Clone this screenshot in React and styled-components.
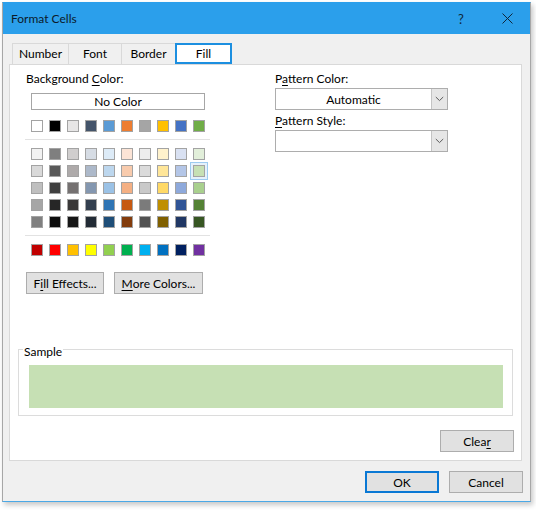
import React from 'react';
import styled, { createGlobalStyle } from 'styled-components';

const Global = createGlobalStyle`
  * { box-sizing: border-box; }
  html, body { margin: 0; padding: 0; background: #ffffff; }
  body {
    font-family: Lato, "Noto Sans", sans-serif;
    font-size: 12px;
    color: #000;
  }
`;

const Page = styled.div`
  width: 536px;
  height: 513px;
  padding: 2px 0 0 2px;
`;

const Window = styled.div`
  width: 529px;
  height: 500px;
  display: flex;
  flex-direction: column;
  background: #f0f0f0;
  border: 1px solid #2b9feb;
  border-left-color: #a7a7a7;
  border-right-color: #a7a7a7;
  border-bottom-color: #4aa8e6;
  box-shadow: 2px 3px 5px rgba(0, 0, 0, 0.22);
`;

const TitleBar = styled.div`
  height: 31px;
  flex: none;
  display: flex;
  align-items: center;
  background: #2b9feb;
  color: #0b1a2a;
`;

const Title = styled.div`
  flex: 1;
  padding-left: 8px;
  font-size: 12px;
`;

const TitleButton = styled.div`
  width: 46px;
  height: 31px;
  display: flex;
  align-items: center;
  justify-content: center;
  font-size: 13px;
  color: #10263a;
`;

const Body = styled.div`
  padding: 9px 8px 0 6px;
  flex: none;
`;

const Tabs = styled.div`
  display: flex;
  height: 21px;
  margin-left: 3px;
`;

const Tab = styled.div`
  position: relative;
  width: ${p => p.$w}px;
  height: 21px;
  margin-left: ${p => (p.$first ? 0 : -1)}px;
  display: flex;
  align-items: center;
  justify-content: center;
  background: ${p => (p.$active ? '#ffffff' : '#f0f0f0')};
  border: ${p => (p.$active ? '2px solid #1c8fe0' : '1px solid #d9d9d9')};
  border-bottom: ${p => (p.$active ? '2px solid #1c8fe0' : 'none')};
  z-index: ${p => (p.$active ? 1 : 0)};
  padding-bottom: 1px;
`;

const Panel = styled.div`
  height: 397px;
  background: #ffffff;
  border: 1px solid #d9d9d9;
  display: flex;
  flex-direction: column;
`;

const TopSection = styled.div`
  display: flex;
  padding: 6px 0 0 16px;
`;

const LeftCol = styled.div`
  width: 249px;
  display: flex;
  flex-direction: column;
`;

const RightCol = styled.div`
  width: 173px;
  display: flex;
  flex-direction: column;
`;

const Label = styled.div`
  height: 15px;
  line-height: 15px;
  margin-top: ${p => p.$mt || 0}px;
  white-space: nowrap;
`;

const NoColorButton = styled.div`
  margin: 7px 0 0 5px;
  width: 174px;
  height: 17px;
  border: 1px solid #a6a6a6;
  background: #ffffff;
  display: flex;
  align-items: center;
  justify-content: center;
  line-height: 15px;
`;

const SwatchRow = styled.div`
  display: flex;
  gap: 6px;
  margin: ${p => p.$mt}px 0 0 5px;
`;

const SwatchGrid = styled.div`
  display: grid;
  grid-template-columns: repeat(10, 12px);
  grid-auto-rows: 12px;
  column-gap: 6px;
  row-gap: 5px;
  margin: 8px 0 0 5px;
`;

const Swatch = styled.span`
  display: block;
  width: 12px;
  height: 12px;
  background: ${p => p.$color};
  border: 1px solid #a3a3a3;
  box-shadow: ${p =>
    p.$selected ? '0 0 0 2px #e5f1fb, 0 0 0 3px #9ccbf0' : 'none'};
`;

const Separator = styled.div`
  height: 1px;
  width: 185px;
  margin: 7px 0 0 -1px;
  background: #e2e2e2;
`;

const ButtonRow = styled.div`
  display: flex;
  gap: 10px;
  margin-top: ${p => p.$mt || 0}px;
  justify-content: ${p => p.$end ? 'flex-end' : 'flex-start'};
  padding-right: ${p => p.$pr || 0}px;
`;

const Button = styled.div`
  width: ${p => p.$w}px;
  height: 22px;
  display: flex;
  align-items: center;
  justify-content: center;
  background: #e1e1e1;
  border: ${p => (p.$primary ? '2px solid #0a78d4' : '1px solid #adadad')};
  line-height: 15px;
  white-space: nowrap;
`;

const Select = styled.div`
  width: 173px;
  height: 22px;
  margin-top: 2px;
  display: flex;
  border: 1px solid #adadad;
  background: #ffffff;
`;

const SelectValue = styled.div`
  flex: 1;
  display: flex;
  align-items: center;
  justify-content: center;
  line-height: 15px;
`;

const DropButton = styled.div`
  width: 16px;
  display: flex;
  align-items: center;
  justify-content: center;
  background: #e6e6e6;
  border-left: 1px solid #c4c4c4;
`;

const BottomSection = styled.div`
  margin-top: auto;
  padding-bottom: 8px;
  display: flex;
  flex-direction: column;
`;

const SampleBox = styled.fieldset`
  margin: 0 8px;
  padding: 6px 9px 7px 10px;
  border: 1px solid #dcdcdc;
  min-width: 0;
`;

const SampleLegend = styled.legend`
  padding: 4px 1px 0;
  margin-left: -6px;
  line-height: 15px;
`;

const SamplePreview = styled.div`
  height: 43px;
  background: ${p => p.$color};
`;

const Footer = styled.div`
  display: flex;
  justify-content: flex-end;
  gap: 10px;
  padding: 10px 7px 0 0;
`;

const Key = styled.span`
  text-decoration: underline;
  text-underline-offset: 2px;
`;

const themeBase = ['#FFFFFF', '#000000', '#E7E6E6', '#44546A', '#5B9BD5', '#ED7D31', '#A5A5A5', '#FFC000', '#4472C4', '#70AD47'];
const shades = [
  ['#F2F2F2', '#7F7F7F', '#D0CECE', '#D6DCE4', '#DDEBF7', '#FCE4D6', '#EDEDED', '#FFF2CC', '#D9E1F2', '#E2EFDA'],
  ['#D9D9D9', '#595959', '#AEAAAA', '#ADB9CA', '#BDD7EE', '#F8CBAD', '#DBDBDB', '#FFE699', '#B4C6E7', '#C6E0B4'],
  ['#BFBFBF', '#404040', '#757171', '#8497B0', '#9BC2E6', '#F4B084', '#C9C9C9', '#FFD966', '#8EA9DB', '#A9D08E'],
  ['#A6A6A6', '#262626', '#3A3838', '#333F4F', '#2F75B5', '#C65911', '#7B7B7B', '#BF8F00', '#305496', '#548235'],
  ['#808080', '#0D0D0D', '#161616', '#222B35', '#1F4E78', '#833C0C', '#525252', '#806000', '#203764', '#375623'],
];
const standard = ['#C00000', '#FF0000', '#FFC000', '#FFFF00', '#92D050', '#00B050', '#00B0F0', '#0070C0', '#002060', '#7030A0'];

const selected = '#C6E0B4';

const tabs = [
  { name: 'Number', w: 57 },
  { name: 'Font', w: 54 },
  { name: 'Border', w: 55 },
  { name: 'Fill', w: 57, active: true },
];

const Chevron = () => (
  <svg width="9" height="6" viewBox="0 0 9 6">
    <path d="M0.8 1 L4.5 4.6 L8.2 1" fill="none" stroke="#5b5b5b" strokeWidth="1" />
  </svg>
);

const CloseIcon = () => (
  <svg width="11" height="11" viewBox="0 0 11 11">
    <path d="M0.5 0.5 L10.5 10.5 M10.5 0.5 L0.5 10.5" stroke="#10263a" strokeWidth="1" />
  </svg>
);

export default function App() {
  return (
    <Page>
      <Global />
      <Window>
        <TitleBar>
          <Title>Format Cells</Title>
          <TitleButton>?</TitleButton>
          <TitleButton><CloseIcon /></TitleButton>
        </TitleBar>
        <Body>
          <Tabs>
            {tabs.map((t, i) => (
              <Tab key={t.name} $w={t.w} $first={i === 0} $active={t.active}>
                {t.name}
              </Tab>
            ))}
          </Tabs>
          <Panel>
            <TopSection>
              <LeftCol>
                <Label>Background <Key>C</Key>olor:</Label>
                <NoColorButton>No Color</NoColorButton>
                <SwatchRow $mt={10}>
                  {themeBase.map(c => <Swatch key={c} $color={c} />)}
                </SwatchRow>
                <Separator />
                <SwatchGrid>
                  {shades.flat().map((c, i) => (
                    <Swatch key={i} $color={c} $selected={i === 19} />
                  ))}
                </SwatchGrid>
                <Separator />
                <SwatchRow $mt={8}>
                  {standard.map(c => <Swatch key={c} $color={c} />)}
                </SwatchRow>
                <ButtonRow $mt={16}>
                  <Button $w={78}>F<Key>i</Key>ll Effects...</Button>
                  <Button $w={89}><Key>M</Key>ore Colors...</Button>
                </ButtonRow>
              </LeftCol>
              <RightCol>
                <Label>P<Key>a</Key>ttern Color:</Label>
                <Select>
                  <SelectValue>Automatic</SelectValue>
                  <DropButton><Chevron /></DropButton>
                </Select>
                <Label $mt={3}><Key>P</Key>attern Style:</Label>
                <Select>
                  <SelectValue />
                  <DropButton><Chevron /></DropButton>
                </Select>
              </RightCol>
            </TopSection>
            <BottomSection>
              <SampleBox>
                <SampleLegend>Sample</SampleLegend>
                <SamplePreview $color={selected} />
              </SampleBox>
              <ButtonRow $mt={14} $end $pr={7}>
                <Button $w={74}>Clea<Key>r</Key></Button>
              </ButtonRow>
            </BottomSection>
          </Panel>
        </Body>
        <Footer>
          <Button $w={74} $primary>OK</Button>
          <Button $w={74}>Cancel</Button>
        </Footer>
      </Window>
    </Page>
  );
}
